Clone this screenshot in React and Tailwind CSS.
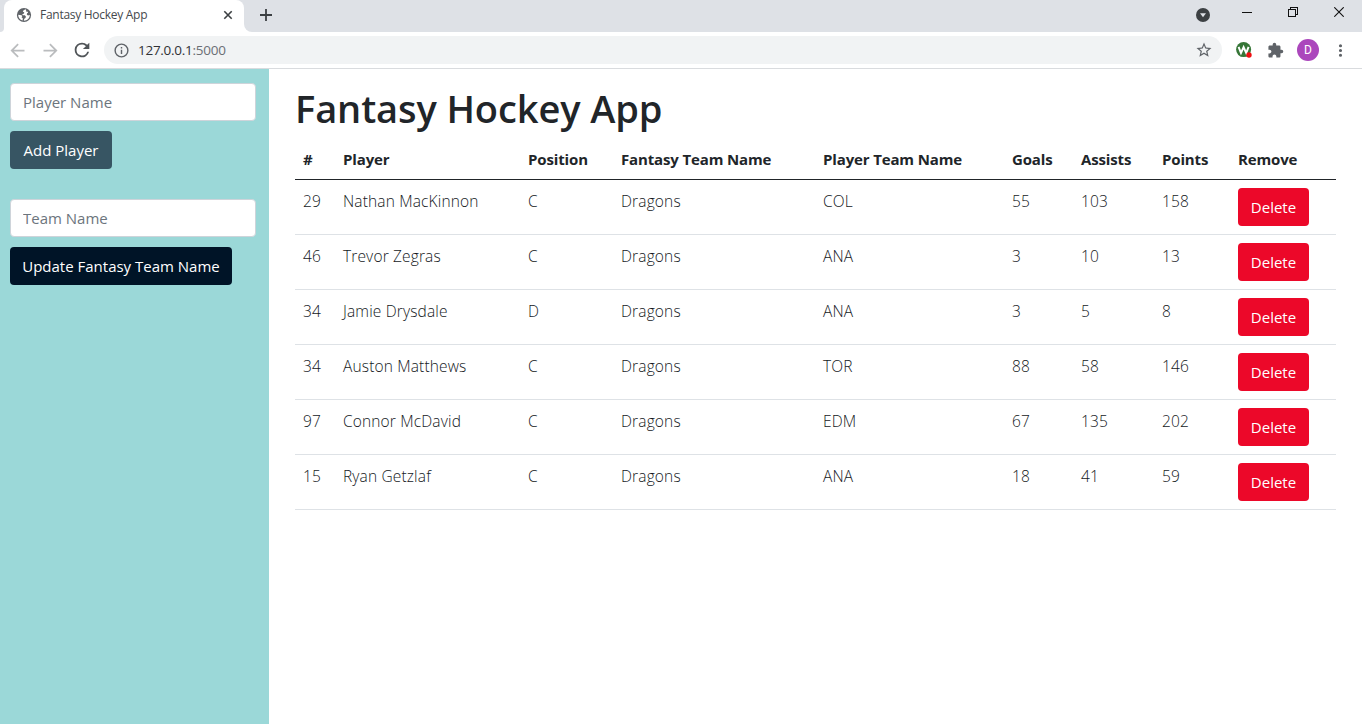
import React from "react";

const players = [
  ["29", "Nathan MacKinnon", "C", "Dragons", "COL", "55", "103", "158"],
  ["46", "Trevor Zegras", "C", "Dragons", "ANA", "3", "10", "13"],
  ["34", "Jamie Drysdale", "D", "Dragons", "ANA", "3", "5", "8"],
  ["34", "Auston Matthews", "C", "Dragons", "TOR", "88", "58", "146"],
  ["97", "Connor McDavid", "C", "Dragons", "EDM", "67", "135", "202"],
  ["15", "Ryan Getzlaf", "C", "Dragons", "ANA", "18", "41", "59"],
];

const headings = ["#", "Player", "Position", "Fantasy Team Name", "Player Team Name", "Goals", "Assists", "Points", "Remove"];

function Icon({ d, className }) {
  return (
    <svg viewBox="0 0 24 24" className={className} fill="currentColor">
      <path d={d} />
    </svg>
  );
}

function TabStrip() {
  return (
    <div className="flex h-8 bg-[#dee1e6]">
      <div className="w-1 bg-white">
        <div className="h-8 w-1 rounded-br-[4px] bg-[#dee1e6]" />
      </div>
      <div className="flex h-8 w-60 items-center rounded-t-lg bg-white pr-[11px] pl-3 pb-[2px]">
        <svg viewBox="0 0 16 16" className="size-4 shrink-0">
          <circle cx="8" cy="8" r="7.1" fill="#5f6368" />
          <path d="M9.600 2.200 7.600 3.200 6.800 4.800 8.200 5.200 8 6.600 6.300 7.200 6.600 8.300 8.800 8.300 9.900 9.400 9.500 11 8.300 11.800 7.800 13.700C11.200 13.800 13.800 11.100 13.800 8L12 8.600 10.800 7.600 11.100 6.300 12 5.800 11.800 4.700 10 4.400 10.200 3.100ZM2.200 7.800 5.600 8.200 6.300 9.300 5.500 10.300 6.800 11.200 6.600 13.600C4 13 2.100 10.800 2.200 7.800Z" fill="#fff" />
        </svg>
        <span className="ml-2 text-[12px] tracking-[-0.28px] whitespace-nowrap text-[#45494d]">Fantasy Hockey App</span>
        <svg viewBox="0 0 10 10" className="ml-auto size-[10px]" stroke="#3c4043" strokeWidth="1.6">
          <path d="M1.300 1.300 8.700 8.700M8.700 1.300 1.300 8.700" />
        </svg>
      </div>
      <div className="w-2 bg-white">
        <div className="h-8 w-2 rounded-bl-lg bg-[#dee1e6]" />
      </div>
      <svg viewBox="0 0 12 12" className="mt-[9px] ml-2 size-3" stroke="#3c4043" strokeWidth="1.8">
        <path d="M6 0v12M0 6h12" />
      </svg>
      <svg viewBox="0 0 14 14" className="mt-2 ml-auto size-[14px]">
        <circle cx="7" cy="7" r="7" fill="#3c4043" />
        <path d="M4 5.200h6L7 9.200z" fill="#dee1e6" />
      </svg>
      <svg viewBox="0 0 10 10" className="mt-[7px] ml-8 size-[10px]" stroke="#111" shapeRendering="crispEdges">
        <path d="M0 5.500h10" />
      </svg>
      <svg viewBox="0 0 10 10" className="mt-[7px] ml-9 size-[10px]" stroke="#111" fill="none" shapeRendering="crispEdges">
        <path d="M.5 2.500h7v7h-7zM2.500 2.500v-2h7v7h-2" />
      </svg>
      <svg viewBox="0 0 10 10" className="mt-[7px] mr-[18px] ml-9 size-[10px]" stroke="#111" strokeWidth="1.100">
        <path d="M.3.3l9.400 9.400M9.700.3.3 9.700" />
      </svg>
    </div>
  );
}

function Toolbar() {
  return (
    <div className="flex h-[37px] items-center border-b border-[#d9dbde] bg-white">
      <Icon className="ml-[7px] size-[21px] shrink-0 text-[#babcbe]" d="M20 11H7.830l5.590-5.590L12 4l-8 8 8 8 1.410-1.410L7.830 13H20v-2z" />
      <Icon className="ml-[12px] size-[21px] shrink-0 text-[#babcbe]" d="M12 4l-1.410 1.410L16.170 11H4v2h12.170l-5.580 5.590L12 20l8-8z" />
      <Icon className="ml-[10px] size-[22px] shrink-0 text-[#505458]" d="M17.650 6.350A7.958 7.958 0 0 0 12 4a8 8 0 1 0 7.730 10h-2.080A6 6 0 1 1 12 6c1.660 0 3.140.69 4.220 1.780L13 11h7V4l-2.350 2.350z" />
      <div className="ml-[11px] flex h-7 flex-1 items-center rounded-full bg-[#f1f3f4] pr-[9px] pl-[9px]">
        <Icon className="size-[17px] text-[#5f6368]" d="M11 17h2v-6h-2v6zm1-15a10 10 0 1 0 0 20 10 10 0 0 0 0-20zm0 18a8 8 0 1 1 0-16 8 8 0 0 1 0 16zM11 9h2V7h-2v2z" />
        <span className="ml-2 text-[13.500px] tracking-[-0.270px] text-[#303236]">
          127.0.0.1<span className="text-[#6b6f74]">:5000</span>
        </span>
        <Icon className="ml-auto size-[18px] text-[#5f6368]" d="M22 9.240l-7.190-.62L12 2 9.190 8.630 2 9.240l5.460 4.730L5.820 21 12 17.270 18.180 21l-1.630-7.030L22 9.240zM12 15.400l-3.760 2.270 1-4.280-3.320-2.880 4.380-.38L12 6.100l1.710 4.040 4.380.38-3.320 2.880 1 4.280L12 15.400z" />
      </div>
      <svg viewBox="0 0 16 16" className="ml-[14px] size-4 shrink-0">
        <circle cx="7.600" cy="7.600" r="7.500" fill="#367637" />
        <path d="M2.600 4.800 5 11 7.600 5.200 10.200 11 12.600 4.800" fill="none" stroke="#fff" strokeWidth="2" />
        <circle cx="13" cy="13" r="2.700" fill="#f00f12" />
      </svg>
      <Icon className="mr-px ml-[15px] size-[17px] shrink-0 text-[#5f6368]" d="M20.500 11H19V7c0-1.100-.9-2-2-2h-4V3.500a2.500 2.500 0 0 0-5 0V5H4c-1.100 0-1.990.9-1.990 2v3.800H3.500c1.490 0 2.700 1.210 2.700 2.700s-1.210 2.700-2.700 2.700H2V20c0 1.100.9 2 2 2h3.800v-1.500c0-1.490 1.210-2.700 2.700-2.700s2.700 1.210 2.700 2.700V22H17c1.100 0 2-.9 2-2v-4h1.500a2.500 2.500 0 0 0 0-5z" />
      <div className="ml-3 flex size-[22px] shrink-0 items-center justify-center rounded-full bg-[#ab47bc] font-[Roboto] text-[12px] text-white">D</div>
      <Icon className="mr-3 ml-3 size-[19px] shrink-0 text-[#5f6368]" d="M12 8a2 2 0 1 0 0-4 2 2 0 0 0 0 4zm0 2a2 2 0 1 0 0 4 2 2 0 0 0 0-4zm0 6a2 2 0 1 0 0 4 2 2 0 0 0 0-4z" />
    </div>
  );
}

function Sidebar() {
  const input = "block h-[38px] w-[246px] rounded border border-[#ced4da] bg-white px-3 text-[15px] placeholder:text-[#6c757d] placeholder:opacity-100";
  const button = "mt-[10px] block h-[38px] rounded text-[15px] whitespace-nowrap text-white";
  return (
    <aside className="w-[269px] shrink-0 bg-[#9bd8d8] pt-[14px] pl-[10px]">
      <input className={input} placeholder="Player Name" />
      <button className={`${button} w-[102px] bg-[#375563]`}>Add Player</button>
      <input className={`${input} mt-[30px]`} placeholder="Team Name" />
      <button className={`${button} w-[222px] bg-[#001427]`}>Update Fantasy Team Name</button>
    </aside>
  );
}

function Roster() {
  return (
    <main className="flex-1 pt-[15px] pl-[26px] text-[#212529]">
      <h1 className="text-[38px] leading-[48px] font-semibold tracking-[-0.100px] whitespace-nowrap">Fantasy Hockey App</h1>
      <table className="mt-[7px] w-[1041px] table-fixed border-collapse text-left text-[15px] leading-6">
        <colgroup>
          <col className="w-[40px]" />
          <col className="w-[185px]" />
          <col className="w-[93px]" />
          <col className="w-[202px]" />
          <col className="w-[189px]" />
          <col className="w-[69px]" />
          <col className="w-[81px]" />
          <col className="w-[76px]" />
          <col className="w-[106px]" />
        </colgroup>
        <thead>
          <tr className="h-10 border-b border-[#212529]">
            {headings.map((h) => (
              <th key={h} className="px-2 pt-px font-bold tracking-[-0.140px] whitespace-nowrap">{h}</th>
            ))}
          </tr>
        </thead>
        <tbody>
          {players.map((p) => (
            <tr key={p[1]} className="h-[55px] border-b border-[#dee2e6]">
              {p.map((v, i) => (
                <td key={i} className="px-2 pt-[9px] align-top text-[15.500px] font-light tracking-[0.150px] whitespace-nowrap text-[#14181c]">{v}</td>
              ))}
              <td className="px-2 pt-2 align-top">
                <button className="block h-[38px] w-[71px] rounded bg-[#ec0829] text-[15px] text-white">Delete</button>
              </td>
            </tr>
          ))}
        </tbody>
      </table>
    </main>
  );
}

export default function App() {
  return (
    <div className="flex h-[724px] w-[1362px] flex-col overflow-hidden bg-white font-['Open_Sans','Noto_Sans',sans-serif]">
      <TabStrip />
      <Toolbar />
      <div className="flex flex-1">
        <Sidebar />
        <Roster />
      </div>
    </div>
  );
}
